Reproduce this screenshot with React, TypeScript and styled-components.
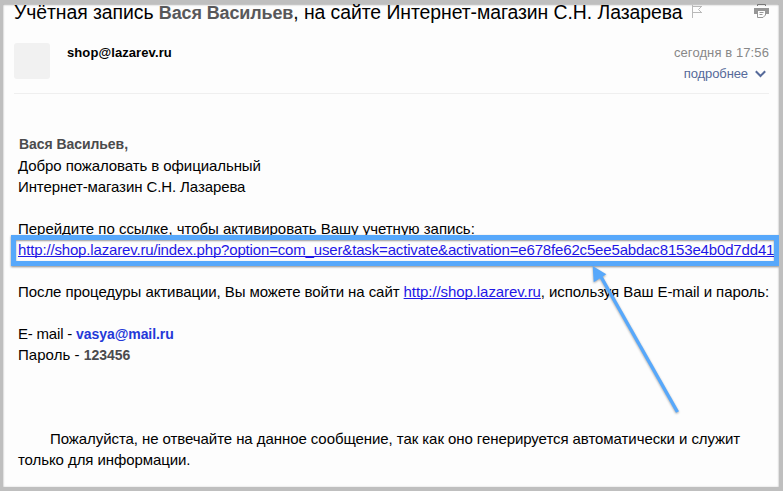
import React from 'react';
import styled, { createGlobalStyle } from 'styled-components';

const GlobalStyle = createGlobalStyle`
  * { box-sizing: border-box; }
  body {
    margin: 0;
    font-family: "Liberation Sans", Arial, sans-serif;
    color: #000;
  }
`;

const Window = styled.div`
  position: relative;
  width: 783px;
  height: 491px;
  overflow: hidden;
  border: 4px solid #bfbfbf;
  border-left-width: 3px;
  background: #fdfdfd;
  box-shadow: inset 0 1px 2px rgba(0, 0, 0, 0.25), inset 0 0 2px rgba(0, 0, 0, 0.15);
`;

const Content = styled.div`
  display: flex;
  flex-direction: column;
  height: 483px;
  padding: 0 10px 0 11px;
`;

const Subject = styled.header`
  display: flex;
  align-items: flex-start;
  height: 39px;
`;

const Title = styled.h1`
  margin: -3px 0 0;
  font-size: 19.4px;
  font-weight: 400;
  line-height: 22px;
  letter-spacing: -0.06px;
  white-space: pre;
`;

const TitleName = styled.strong`
  font-size: 18px;
  letter-spacing: -0.13px;
  color: #58585a;
`;

const FlagIcon = styled.svg`
  flex: none;
  margin: 0 0 0 9px;
`;

const PrintIcon = styled.svg`
  flex: none;
  margin-left: auto;
`;

const Sender = styled.section`
  display: flex;
  height: 51px;
  border-bottom: 1px solid #efefef;
`;

const Avatar = styled.div`
  width: 36px;
  height: 36px;
  border-radius: 3px;
  background: #f1f1f1;
`;

const Address = styled.div`
  margin: 1px 0 0 17px;
  font-size: 13px;
  font-weight: 700;
  line-height: 18px;
  letter-spacing: 0.09px;
`;

const Meta = styled.div`
  display: flex;
  flex-direction: column;
  align-items: flex-end;
  margin: -1px 0 0 auto;
  font-size: 13px;
  line-height: 21px;
`;

const Time = styled.time`
  letter-spacing: 0.1px;
  color: #888;
`;

const Details = styled.div`
  display: flex;
  align-items: center;
  gap: 7px;
  padding-right: 3px;
  letter-spacing: -0.1px;
  color: #566a9a;
`;

const Message = styled.main`
  margin-top: 40px;
  padding-left: 4px;
  font-size: 15px;
  line-height: 21px;
`;

const Line = styled.div<{ $track?: number; $indent?: number }>`
  height: 21px;
  padding-left: ${p => p.$indent ?? 0}px;
  letter-spacing: ${p => p.$track ?? -0.08}px;
  white-space: pre;
`;

const Gap = styled.div<{ $lines?: number }>`
  height: ${p => (p.$lines ?? 1) * 21}px;
`;

const Value = styled.strong`
  font-size: 14px;
  letter-spacing: -0.06px;
  color: #4b4b4d;
`;

const Greeting = styled(Value)`
  position: relative;
  top: -1px;
`;

const Email = styled(Value)`
  color: #2438d8;
`;

const Link = styled.a<{ $track?: number }>`
  color: #1f17e6;
  letter-spacing: ${p => p.$track ?? -0.08}px;
  text-decoration: underline;
  text-decoration-thickness: 1px;
  text-underline-offset: 1px;
  text-decoration-skip-ink: none;
`;

const Highlight = styled.div`
  position: absolute;
  left: 8px;
  top: 231px;
  width: 768px;
  height: 31px;
  border: 5px solid #57a8fb;
  box-shadow: 0 1px 2px rgba(0, 0, 0, 0.45), inset 0 1px 2px rgba(0, 0, 0, 0.4);
`;

const Arrow = styled.svg`
  position: absolute;
  left: 577px;
  top: 256px;
  filter: drop-shadow(0 1px 1px rgba(0, 0, 0, 0.35));
`;

export default function App() {
  return (
    <>
      <GlobalStyle />
      <Window>
        <Content>
          <Subject>
            <Title>
              Учётная запись <TitleName>Вася Васильев</TitleName>, на сайте Интернет-магазин С.Н. Лазарева
            </Title>
            <FlagIcon width="12" height="14" fill="none" stroke="#b9b9b9">
              <path d="M1.5 1v13M2 2.5h9M2 8.5h9M10.5 2.5L7.5 5.5l3 3" />
            </FlagIcon>
            <PrintIcon width="15" height="14" fill="none" stroke="#969696">
              <path d="M3.5 2V.5h8V2" stroke="#777" />
              <path d="M0 4h15v6h-3V7H3v3H0z" fill="#969696" stroke="none" />
              <path d="M3.5 7v6.5h5.5l2.5-2.5V7M5.5 8.5h4M5.5 10.5h3" />
            </PrintIcon>
          </Subject>
          <Sender>
            <Avatar />
            <Address>shop@lazarev.ru</Address>
            <Meta>
              <Time>сегодня в 17:56</Time>
              <Details>
                подробнее
                <svg width="11" height="8" fill="none" stroke="#566a9a" strokeWidth="2">
                  <path d="M.8 1.2L5.500 6l4.700-4.800" />
                </svg>
              </Details>
            </Meta>
          </Sender>
          <Message>
            <Line $indent={1}><Greeting>Вася Васильев,</Greeting></Line>
            <Line>Добро пожаловать в официальный</Line>
            <Line $track={-0.1}>Интернет-магазин С.Н. Лазарева</Line>
            <Gap />
            <Line $track={-0.02}>Перейдите по ссылке, чтобы активировать Вашу учетную запись:</Line>
            <Line>
              <Link $track={-0.16}>
                http://shop.lazarev.ru/index.php?option=com_user&amp;task=activate&amp;activation=e678fe62c5ee5abdac8153e4b0d7dd41
              </Link>
            </Line>
            <Gap />
            <Line $track={-0.07}>
              После процедуры активации, Вы можете войти на сайт <Link>http://shop.lazarev.ru</Link>, используя Ваш E-mail и пароль:
            </Line>
            <Gap />
            <Line $track={-0.2}>E- mail - <Email>vasya@mail.ru</Email></Line>
            <Line $track={0.05}>Пароль - <Value>123456</Value></Line>
            <Gap $lines={3} />
            <Line $indent={32} $track={-0.07}>
              Пожалуйста, не отвечайте на данное сообщение, так как оно генерируется автоматически и служит
            </Line>
            <Line>только для информации.</Line>
          </Message>
        </Content>
        <Highlight />
        <Arrow width="110" height="160" fill="#57a8fb">
          <path d="M20.500 16L97.500 152" stroke="#57a8fb" strokeWidth="3.400" />
          <path d="M12.700 6L26.300 14.300L13.700 22.300z" />
        </Arrow>
      </Window>
    </>
  );
}
